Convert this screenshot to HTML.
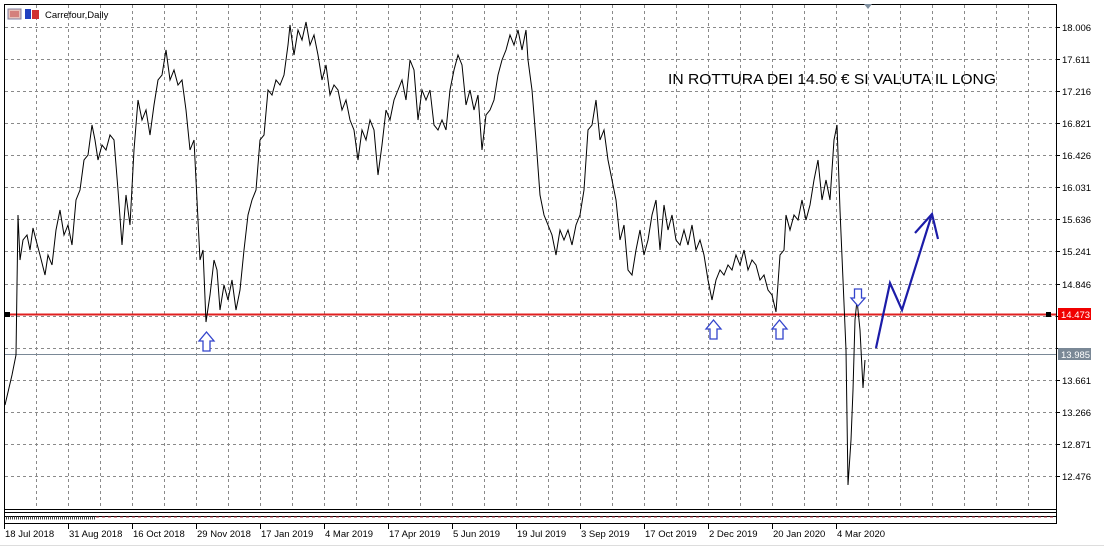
<!DOCTYPE html>
<html><head><meta charset="utf-8"><style>
body{margin:0;background:#fff;width:1104px;height:546px;overflow:hidden;font-family:"Liberation Sans",sans-serif}
svg{display:block}
</style></head><body>
<svg width="1104" height="546" xmlns="http://www.w3.org/2000/svg" font-family="Liberation Sans, sans-serif">
<rect x="0" y="0" width="1104" height="546" fill="#fff"/>
<line x1="0" y1="545.5" x2="1104" y2="545.5" stroke="#ddd"/>
<rect x="4.5" y="4.5" width="1052" height="519" fill="none" stroke="#000"/>
<g id="grid"></g>
<line x1="4" y1="509.5" x2="1056" y2="509.5" stroke="#000"/>
<line x1="4" y1="512.5" x2="1056" y2="512.5" stroke="#000"/>
<line x1="4" y1="516.5" x2="1056" y2="516.5" stroke="#000"/>
<path d="M6 518 h90" stroke="#444" stroke-dasharray="1,1" stroke-width="3"/>
<path d="M96 517 h960" stroke="#b03040" stroke-dasharray="3,3" stroke-width="1"/>
<line x1="5" y1="314.5" x2="1056" y2="314.5" stroke="#e02020" stroke-width="2"/>
<rect x="5" y="312" width="5" height="5" fill="#000"/>
<rect x="1046" y="312" width="5" height="5" fill="#000"/>
<line x1="5" y1="354.5" x2="1056" y2="354.5" stroke="#7a8896"/>
<polyline fill="none" stroke="#000" stroke-width="1" points="5,405 12,375 16,355 18,215 20,260 23,240 27,235 30,250 33,228 36,240 40,255 45,275 48,255 52,265 56,230 60,210 64,235 68,225 72,245 76,200 80,190 84,160 88,155 92,125 95,140 98,160 102,145 106,150 110,135 114,140 118,190 122,245 126,195 130,225 134,150 138,100 142,120 146,110 150,135 154,105 158,80 162,75 166,50 170,80 174,70 178,85 182,80 186,110 190,150 194,140 197,200 200,260 203,250 206,322 210,295 214,260 217,270 220,310 224,285 228,300 232,280 236,310 240,290 244,250 248,215 252,200 256,190 260,140 264,135 268,90 272,95 276,80 280,85 284,75 288,45 290,25 294,55 298,30 302,40 306,22 310,45 314,35 318,55 322,80 326,65 330,95 334,85 338,90 342,110 346,100 350,120 354,130 358,160 362,130 366,140 370,120 374,130 378,175 382,145 386,110 390,120 394,100 398,90 402,80 406,100 410,60 414,70 418,120 422,90 426,100 430,90 434,125 438,130 442,120 446,130 450,90 454,70 458,55 462,65 466,105 470,90 474,110 478,95 482,150 486,115 490,110 494,100 498,75 502,60 506,50 510,35 514,45 518,30 522,50 526,30 528,60 532,90 536,140 540,195 544,215 548,225 552,235 556,255 560,230 564,240 568,230 572,245 576,225 580,215 584,190 588,130 592,125 596,100 600,140 604,130 608,160 612,180 616,200 620,240 624,225 628,270 632,275 636,250 640,230 644,255 648,240 652,215 656,200 660,250 664,205 668,230 672,215 676,240 680,245 684,230 688,245 692,225 696,250 700,240 704,255 708,280 712,300 716,280 720,270 724,275 728,265 732,270 736,255 740,265 744,250 748,270 752,260 756,265 760,280 764,275 768,290 772,295 776,312 780,255 784,250 786,215 790,230 794,215 798,220 802,200 806,220 810,205 814,180 818,160 822,200 826,180 830,200 834,140 837,125 840,210 843,280 846,350 848,485 851,440 853,390 855,320 857,300 860,330 863,388 865,360"/>
<g fill="#fff" stroke="#3344cc" stroke-width="1.3">
<path d="M206.5 332 L214 341 L210 341 L210 351 L203 351 L203 341 L199 341 Z"/>
<path d="M713.5 320 L721 329 L717 329 L717 339 L710 339 L710 329 L706 329 Z"/>
<path d="M779.5 320 L787 329 L783 329 L783 339 L776 339 L776 329 L772 329 Z"/>
<path d="M858 306 L865 298 L861.5 298 L861.5 289 L854.5 289 L854.5 298 L851 298 Z"/>
</g>
<g fill="none" stroke="#1c1ca8" stroke-width="2.2">
<polyline points="876,348 890,283 902,310 932,214"/>
<polyline points="915,233 932,214 938,239"/>
</g>
<text x="668" y="84" font-size="15" fill="#000" textLength="328" lengthAdjust="spacingAndGlyphs">IN ROTTURA DEI 14.50 € SI VALUTA IL LONG</text>
<g>
<rect x="8" y="9" width="13" height="10" fill="#e8c0b8" stroke="#8080a0"/>
<path d="M10 12h9M10 14h9M10 16h9" stroke="#c04040"/>
<rect x="25" y="9" width="6" height="10" fill="#2040c0"/><rect x="32" y="10" width="7" height="9" fill="#d03030"/>
<text x="45" y="18" font-size="9.5" fill="#000">Carrefour,Daily</text>
</g>
<path d="M864 4 L872 4 L868 9 Z" fill="#8090a0"/>
<g font-size="9.5" fill="#000" id="axis"></g>
<rect x="1058" y="308" width="33" height="12" fill="#f00000"/>
<text x="1061" y="318" font-size="9.5" fill="#fff">14.473</text>
<rect x="1058" y="348" width="33" height="12" fill="#7a8896"/>
<text x="1061" y="358" font-size="9.5" fill="#fff">13.985</text>
</svg>
<script>
var ns="http://www.w3.org/2000/svg",g=document.getElementById('grid');
function el(n,a,p){var e=document.createElementNS(ns,n);for(var k in a)e.setAttribute(k,a[k]);(p||g).appendChild(e);return e}
for(var x=36;x<1056;x+=32)el('line',{x1:x+.5,y1:5,x2:x+.5,y2:509,stroke:'#8a8a8a','stroke-dasharray':'3,3'});
for(var i=0;i<15;i++){var y=Math.round(27+32.07*i)+.5;el('line',{x1:5,y1:y,x2:1056,y2:y,stroke:'#8a8a8a','stroke-dasharray':'3,3'});}
var ax=document.getElementById('axis');
var pr=["18.006","17.611","17.216","16.821","16.426","16.031","15.636","15.241","14.846","14.451","14.056","13.661","13.266","12.871","12.476"];
for(var i=0;i<15;i++){var y=Math.round(27+32.07*i);el('line',{x1:1056,y1:y+.5,x2:1060,y2:y+.5,stroke:'#000'},ax);if(i!=9&&i!=10){var t=el('text',{x:1062,y:y+4},ax);t.textContent=pr[i];}}
var d=["18 Jul 2018","31 Aug 2018","16 Oct 2018","29 Nov 2018","17 Jan 2019","4 Mar 2019","17 Apr 2019","5 Jun 2019","19 Jul 2019","3 Sep 2019","17 Oct 2019","2 Dec 2019","20 Jan 2020","4 Mar 2020"];
for(var i=0;i<14;i++){var x=4+64*i;el('line',{x1:x+.5,y1:524,x2:x+.5,y2:529,stroke:'#000'},ax);var t=el('text',{x:x+1,y:537},ax);t.textContent=d[i];}
</script>
</body></html>
